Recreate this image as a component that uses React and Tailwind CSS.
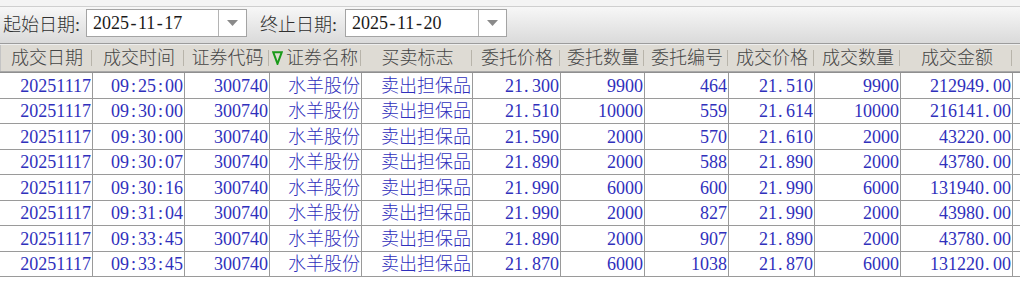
import React from "react";

const cols = [
  { t: "成交日期", w: "w-[93px]" },
  { t: "成交时间", w: "w-[92px]" },
  { t: "证券代码", w: "w-[85px]" },
  { t: "证券名称", w: "w-[92px]", sort: true },
  { t: "买卖标志", w: "w-[111px]" },
  { t: "委托价格", w: "w-[88px]" },
  { t: "委托数量", w: "w-[84px]" },
  { t: "委托编号", w: "w-[84px]" },
  { t: "成交价格", w: "w-[86px]" },
  { t: "成交数量", w: "w-[86px]" },
  { t: "成交金额", w: "w-[112px]" },
];

const rows = [
  ["20251117", "09:25:00", "300740", "水羊股份", "卖出担保品", "21.300", "9900", "464", "21.510", "9900", "212949.00"],
  ["20251117", "09:30:00", "300740", "水羊股份", "卖出担保品", "21.510", "10000", "559", "21.614", "10000", "216141.00"],
  ["20251117", "09:30:00", "300740", "水羊股份", "卖出担保品", "21.590", "2000", "570", "21.610", "2000", "43220.00"],
  ["20251117", "09:30:07", "300740", "水羊股份", "卖出担保品", "21.890", "2000", "588", "21.890", "2000", "43780.00"],
  ["20251117", "09:30:16", "300740", "水羊股份", "卖出担保品", "21.990", "6000", "600", "21.990", "6000", "131940.00"],
  ["20251117", "09:31:04", "300740", "水羊股份", "卖出担保品", "21.990", "2000", "827", "21.990", "2000", "43980.00"],
  ["20251117", "09:33:45", "300740", "水羊股份", "卖出担保品", "21.890", "2000", "907", "21.890", "2000", "43780.00"],
  ["20251117", "09:33:45", "300740", "水羊股份", "卖出担保品", "21.870", "6000", "1038", "21.870", "6000", "131220.00"],
];

const heights = ["h-[26px]", "h-[25px]", "h-[26px]", "h-[25px]", "h-[26px]", "h-[25px]", "h-[26px]", "h-[25px]"];

const font = { fontFamily: '"Liberation Serif", "Noto Sans CJK SC", serif' };

// Emulate half-width punctuation cells of the original bitmap font
function Txt({ v }) {
  const parts = [];
  let buf = "";
  [...v].forEach((ch, i) => {
    if (ch === ":" || ch === "." || ch === "-") {
      if (buf) parts.push(buf);
      buf = "";
      parts.push(
        <span
          key={i}
          className={`inline-block w-[9px] ${ch === "." ? "text-left pl-[1px]" : "text-center"}`}
        >
          {ch}
        </span>
      );
    } else {
      buf += ch;
    }
  });
  if (buf) parts.push(buf);
  return <>{parts}</>;
}

function DateBox({ value, w }) {
  return (
    <div className={`flex h-[28px] ${w} items-stretch border border-[#a4a4a4] bg-white`}>
      <div className="flex flex-1 items-center pl-[6px] text-[18px] text-[#1a1a1a]">
        <span>
          <Txt v={value} />
        </span>
      </div>
      <div className="flex w-[28px] items-center justify-center border-l border-[#b4b4b4]">
        <svg width="11" height="6" viewBox="0 0 11 6">
          <polygon points="0,0 11,0 5.5,6" fill="#8a8a8a" />
        </svg>
      </div>
    </div>
  );
}

export default function App() {
  return (
    <div className="h-[281px] w-[1020px] overflow-hidden bg-white font-light" style={font}>
      <div className="h-[7px] border-b border-[#cfcfcf] bg-[#f4f4f4]" />
      <div className="flex h-[37px] items-start border-b border-[#9c9c9c] bg-gradient-to-b from-[#f7f7f7] to-[#dadada] pt-[2px]">
        <span className="ml-[3px] mt-[3px] text-[18px] text-[#303030]">起始日期:</span>
        <div className="ml-[6px]">
          <DateBox value="2025-11-17" w="w-[161px]" />
        </div>
        <span className="ml-[13px] mt-[3px] text-[18px] text-[#303030]">终止日期:</span>
        <div className="ml-[8px]">
          <DateBox value="2025-11-20" w="w-[162px]" />
        </div>
      </div>
      <div className="h-[1px] bg-[#eeeeee]" />
      <div className="flex h-[27px] border-b border-[#a8a8a8] bg-[#dedbd4]">
        {cols.map((c, i) => (
          <div key={i} className={`relative flex ${c.w} items-center justify-center ${i === 0 ? "border-l border-[#c4c4c4]" : ""}`}>
            {c.sort && (
              <svg className="absolute left-[2px] top-[6px]" width="11" height="14" viewBox="0 0 11 14">
                <polygon points="1.2,1.2 9.8,1.2 5.5,12.8" fill="none" stroke="#1a9a1a" strokeWidth="2" strokeLinejoin="miter" />
              </svg>
            )}
            <span className={`text-[18px] text-[#454545] ${c.sort ? "pl-[12px]" : ""}`}>{c.t}</span>
            <div className="absolute right-[1px] top-[5px] h-[16px] w-[1px] bg-[#b8b4aa]" />
          </div>
        ))}
        <div className="flex-1" />
      </div>
      <div className="h-[1px] bg-[#8f8f8f]" />
      {rows.map((r, ri) => (
        <div key={ri} className={`flex ${heights[ri]} border-b border-[#9a9a9a]`}>
          {r.map((v, ci) => (
            <div
              key={ci}
              className={`flex ${cols[ci].w} items-center justify-end border-r border-[#9a9a9a] pr-[1px] text-[18px] leading-none text-[#3030bc]`}
            >
              <span className="whitespace-nowrap">
                <Txt v={v} />
              </span>
            </div>
          ))}
          <div className="flex-1" />
        </div>
      ))}
    </div>
  );
}
